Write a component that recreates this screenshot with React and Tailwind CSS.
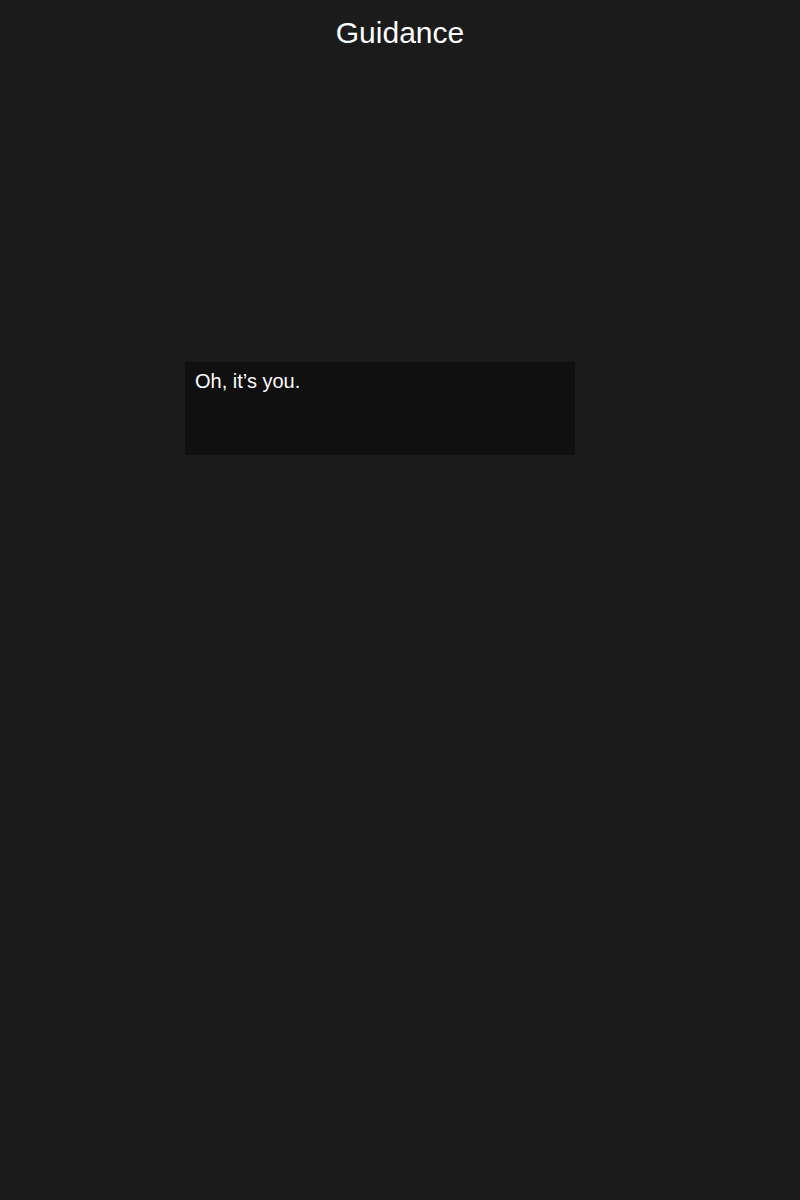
import React from 'react';

export default function App() {
  return (
    <div className="min-h-[1200px] bg-[#1b1b1b] text-white font-['Liberation_Sans',Arial,sans-serif]">
      <h1 className="pt-[10px] text-center text-[30px] leading-normal">Guidance</h1>
      <div className="ml-[185px] mt-[307px] w-[390px] h-[93px] bg-[#101010] pt-1 px-[10px]">
        <p className="text-[20px] leading-normal">Oh, it’s you.</p>
      </div>
    </div>
  );
}
